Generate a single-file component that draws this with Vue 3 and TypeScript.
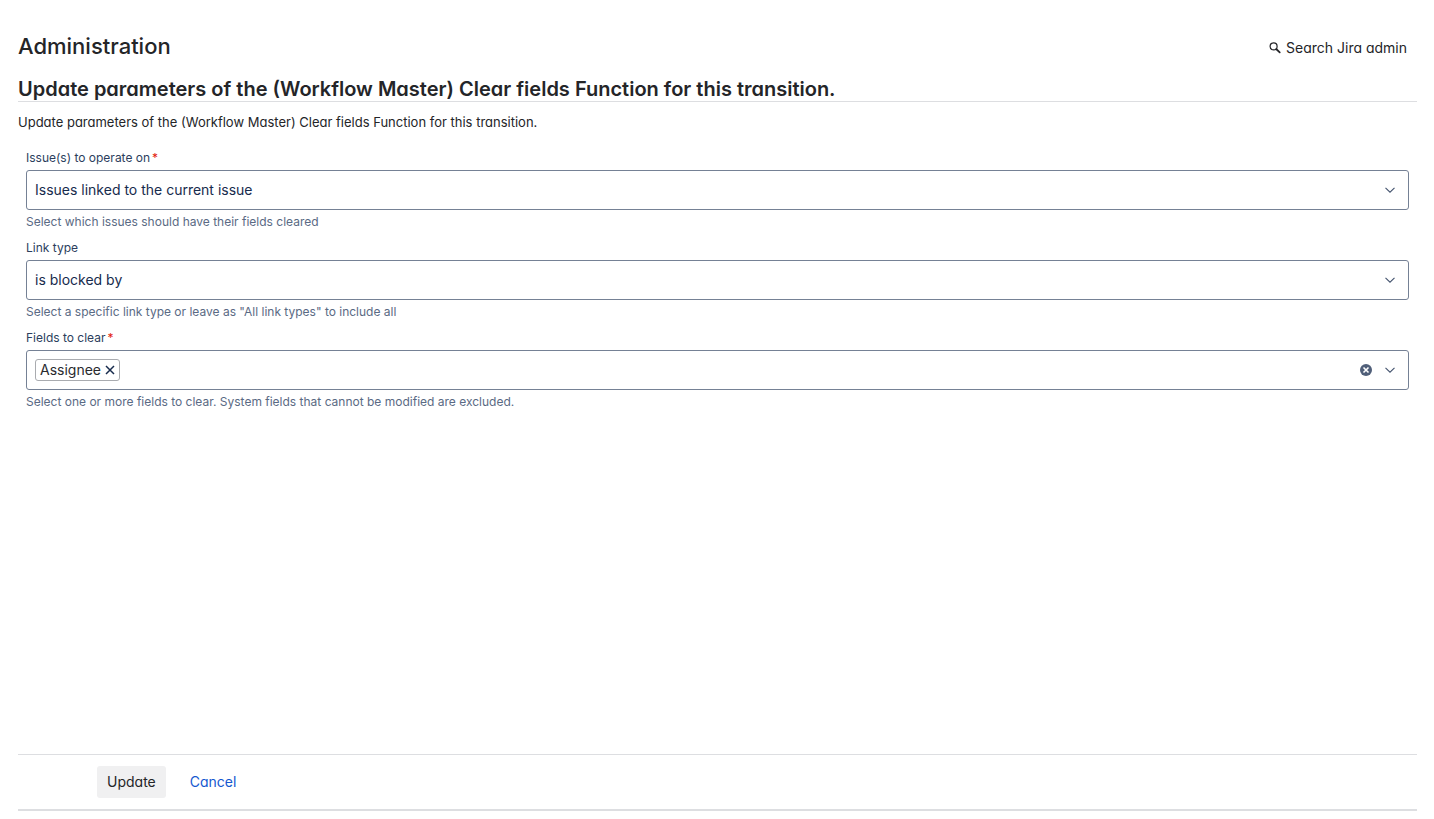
<script setup lang="ts">
import { ref } from 'vue'

const scopes = ['Issues linked to the current issue', 'Current issue', 'Parent issue']
const linkTypes = ['is blocked by', 'blocks', 'All link types']

const scope = ref(scopes[0])
const linkType = ref(linkTypes[0])
const fields = ref<string[]>(['Assignee'])

function removeField(name: string) {
  fields.value = fields.value.filter((f) => f !== name)
}
</script>

<template>
  <div class="page">
    <header class="top">
      <h1>Administration</h1>
      <button type="button" class="search">
        <svg width="12" height="12" viewBox="0 0 12 12" fill="none" stroke="currentColor" aria-hidden="true">
          <circle cx="4.6" cy="4.4" r="3.5" stroke-width="1.2" />
          <path d="M7.2 7 10.7 10.3" stroke-width="1.8" stroke-linecap="round" />
        </svg>
        <span>Search Jira admin</span>
      </button>
    </header>

    <h2>Update parameters of the (Workflow Master) Clear fields Function for this transition.</h2>
    <p class="intro">Update parameters of the (Workflow Master) Clear fields Function for this transition.</p>

    <form class="form" @submit.prevent>
      <div class="fields">
        <div class="field">
          <label for="scope">Issue(s) to operate on<span class="required">*</span></label>
          <div class="control">
            <select id="scope" v-model="scope" required>
              <option v-for="s in scopes" :key="s">{{ s }}</option>
            </select>
            <svg class="chevron" width="12" height="12" viewBox="0 0 12 12" aria-hidden="true">
              <path d="M1.5 3.8 6 8.2 10.5 3.8" />
            </svg>
          </div>
          <p class="help">Select which issues should have their fields cleared</p>
        </div>

        <div class="field">
          <label for="link-type">Link type</label>
          <div class="control">
            <select id="link-type" v-model="linkType">
              <option v-for="t in linkTypes" :key="t">{{ t }}</option>
            </select>
            <svg class="chevron" width="12" height="12" viewBox="0 0 12 12" aria-hidden="true">
              <path d="M1.5 3.8 6 8.2 10.5 3.8" />
            </svg>
          </div>
          <p class="help">Select a specific link type or leave as "All link types" to include all</p>
        </div>

        <div class="field">
          <label for="clear-fields">Fields to clear<span class="required">*</span></label>
          <div class="control multi">
            <span v-for="f in fields" :key="f" class="tag">
              {{ f }}
              <button type="button" :aria-label="`Remove ${f}`" @click="removeField(f)">
                <svg width="10" height="10" viewBox="0 0 10 10" aria-hidden="true">
                  <path d="M1 1 9 9M9 1 1 9" fill="none" stroke="currentColor" stroke-width="1.5" />
                </svg>
              </button>
            </span>
            <input id="clear-fields" type="text" autocomplete="off" />
            <button type="button" class="clear" aria-label="Clear all" @click="fields = []">
              <svg width="12" height="12" viewBox="0 0 12 12" aria-hidden="true">
                <circle cx="6" cy="6" r="6" fill="currentColor" />
                <path d="M3.5 3.5 8.5 8.5M8.5 3.5 3.5 8.5" stroke="#fff" stroke-width="1.6" />
              </svg>
            </button>
            <svg class="chevron" width="12" height="12" viewBox="0 0 12 12" aria-hidden="true">
              <path d="M1.5 3.8 6 8.2 10.5 3.8" />
            </svg>
          </div>
          <p class="help">Select one or more fields to clear. System fields that cannot be modified are excluded.</p>
        </div>
      </div>

      <footer class="actions">
        <button type="submit" class="update">Update</button>
        <a href="#">Cancel</a>
      </footer>
    </form>
  </div>
</template>

<style>
body {
  background: #fff;
}
</style>

<style scoped>
.page {
  box-sizing: border-box;
  min-height: 100vh;
  padding: 32px 17px 8px 18px;
  display: flex;
  flex-direction: column;
  color: #242528;
  font-family: Inter, "Liberation Sans", sans-serif;
  font-size: 14px;
  line-height: 20px;
  font-feature-settings: "cv11";
}
h1,
h2,
p {
  margin: 0;
}
button,
input,
select {
  font: inherit;
  color: inherit;
  border: 0;
  padding: 0;
  background: none;
}
button {
  cursor: pointer;
  font-feature-settings: inherit;
}
.top {
  display: flex;
  justify-content: space-between;
  align-items: center;
}
h1 {
  font-size: 22px;
  font-weight: 500;
  line-height: 28px;
  font-feature-settings: normal;
}
.search {
  display: flex;
  align-items: center;
  gap: 5px;
  padding: 4px 10px 0 0;
}
h2 {
  margin-top: 17px;
  font-size: 20px;
  font-weight: 600;
  line-height: 24px;
  border-bottom: 1px solid #dddee1;
}
.intro {
  margin-top: 10px;
  font-size: 13px;
}
.form {
  flex: 1;
  display: flex;
  flex-direction: column;
}
.fields {
  flex: 1;
  display: flex;
  flex-direction: column;
  gap: 10px;
  padding: 18px 8px 24px;
  font-feature-settings: normal;
}
.field {
  display: flex;
  flex-direction: column;
}
.field label {
  font-size: 12px;
  line-height: 16px;
  color: #2c3e5d;
}
.required {
  padding-left: 2px;
  color: #e2200c;
}
.control {
  box-sizing: border-box;
  display: grid;
  align-items: center;
  height: 40px;
  margin-top: 4px;
  border: 1px solid #758195;
  border-radius: 3px;
  color: #172b4d;
}
.control select {
  grid-area: 1 / 1;
  width: 100%;
  height: 38px;
  padding: 0 36px 0 8px;
  appearance: none;
}
.chevron {
  grid-area: 1 / 1;
  justify-self: end;
  margin-right: 12px;
  fill: none;
  stroke: #44546f;
  stroke-width: 1.1;
  pointer-events: none;
}
.multi {
  display: flex;
  padding-left: 8px;
}
.tag {
  display: flex;
  align-items: center;
  gap: 4px;
  padding: 0 4px;
  border: 1px solid #a9abaf;
  border-radius: 3px;
  color: #292a2e;
}
.tag button {
  display: flex;
  color: #172b4d;
}
.multi input {
  flex: 1;
  min-width: 0;
  outline: none;
}
.clear {
  display: flex;
  margin-right: 12px;
  color: #505f79;
}
.help {
  margin-top: 4px;
  font-size: 12px;
  line-height: 16px;
  color: #5a6a84;
}
.actions {
  display: flex;
  align-items: center;
  gap: 24px;
  padding: 11px 0 11px 79px;
  border-top: 1px solid #dddee1;
  border-bottom: 2px solid #dddee1;
}
.update {
  height: 32px;
  padding: 0 10px;
  border-radius: 3px;
  background: #f0f0f1;
}
.actions a {
  color: #1558cf;
  text-decoration: none;
}
</style>
